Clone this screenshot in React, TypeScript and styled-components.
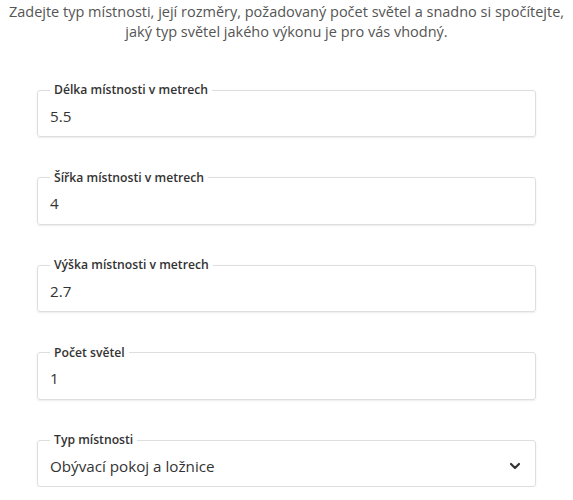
import React from "react";
import styled, { createGlobalStyle } from "styled-components";

const Global = createGlobalStyle`
  html, body { margin: 0; padding: 0; background: #fff; }
  body { font-family: "Open Sans", "Liberation Sans", sans-serif; }
  * { box-sizing: border-box; }
`;

const Page = styled.div`
  width: 573px;
  padding: 2px 4px 0;
`;

const Intro = styled.p`
  margin: 0;
  font-size: 14.5px;
  line-height: 20px;
  color: #555;
  text-align: center;
`;

const Form = styled.div`
  display: flex;
  flex-direction: column;
  gap: 32.5px;
  margin: 40px 33px 0;
`;

const Field = styled.fieldset`
  margin: 0;
  padding: 0 12px;
  border: 1px solid #dedede;
  border-radius: 3px;
  box-shadow: 0 1px 2px rgba(0, 0, 0, 0.08);
  background: #fff;
`;

const Legend = styled.legend`
  padding: 0 4px;
  font-family: "Open Sans", sans-serif;
  font-weight: 600;
  font-size: 12.2px;
  line-height: 16px;
  color: #333;
`;

const Value = styled.div`
  display: flex;
  align-items: center;
  justify-content: space-between;
  height: 38px;
  padding-bottom: 3px;
  font-size: 15.2px;
  color: #333;
`;

const Chevron = styled.svg`
  width: 12px;
  height: 12px;
  margin-right: 2px;
`;

const fields = [
  { label: "Délka místnosti v metrech", value: "5.5" },
  { label: "Šířka místnosti v metrech", value: "4" },
  { label: "Výška místnosti v metrech", value: "2.7" },
  { label: "Počet světel", value: "1" },
];

export default function App() {
  return (
    <Page>
      <Global />
      <Intro>
        Zadejte typ místnosti, její rozměry, požadovaný počet světel a snadno si spočítejte,
        jaký typ světel jakého výkonu je pro vás vhodný.
      </Intro>
      <Form>
        {fields.map((f) => (
          <Field key={f.label}>
            <Legend>{f.label}</Legend>
            <Value>{f.value}</Value>
          </Field>
        ))}
        <Field>
          <Legend>Typ místnosti</Legend>
          <Value>
            <span>Obývací pokoj a ložnice</span>
            <Chevron viewBox="0 0 12 12">
              <path d="M2 4 L6 8 L10 4" fill="none" stroke="#333" strokeWidth="2.2" strokeLinecap="round" strokeLinejoin="round" />
            </Chevron>
          </Value>
        </Field>
      </Form>
    </Page>
  );
}
